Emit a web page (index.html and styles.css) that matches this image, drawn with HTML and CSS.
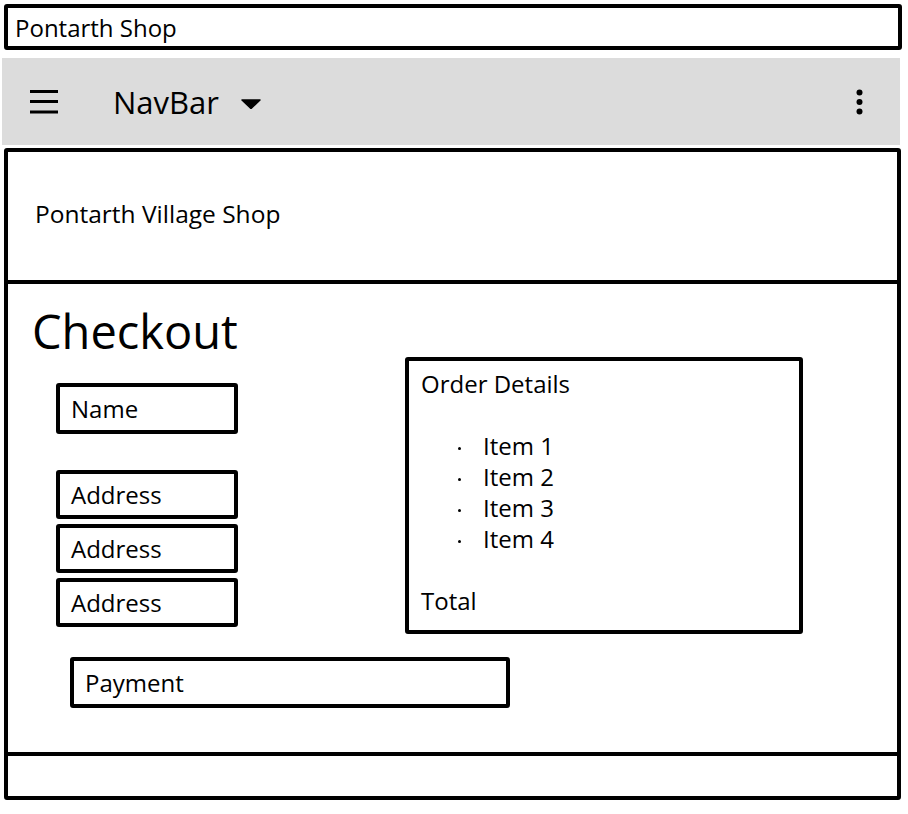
FILE: index.html
```html
<!DOCTYPE html>
<html lang="en">
<head>
    <meta charset="UTF-8">
    <meta name="viewport" content="width=device-width, initial-scale=1.0">
    <title>Pontarth Shop</title>
    <link rel="stylesheet" href="styles.css">
</head>
<body>

    <div class="titlebar">Pontarth Shop</div>

    <nav class="navbar">
        <svg class="icon-menu" width="28" height="24" viewBox="0 0 28 24">
            <path d="M0 1.5H28M0 11.5H28M0 22H28" stroke="#000" stroke-width="3"/>
        </svg>
        <span class="brand">NavBar</span>
        <svg class="icon-caret" width="20" height="10" viewBox="0 0 20 10">
            <path d="M1 1H19L10 9.5Z" fill="#000" stroke="#000" stroke-width="1.5" stroke-linejoin="round"/>
        </svg>
        <span class="spacer"></span>
        <svg class="icon-more" width="7" height="26" viewBox="0 0 7 26">
            <circle cx="3.5" cy="3.5" r="3"/>
            <circle cx="3.5" cy="13" r="3"/>
            <circle cx="3.5" cy="22.5" r="3"/>
        </svg>
    </nav>

    <div class="frame">
        <header class="site-header">Pontarth Village Shop</header>

        <main class="checkout">
            <h1>Checkout</h1>

            <div class="checkout-body">
                <div class="fields">
                    <div class="field field-name">Name</div>
                    <div class="address-group">
                        <div class="field">Address</div>
                        <div class="field">Address</div>
                        <div class="field">Address</div>
                    </div>
                </div>

                <div class="order">
                    <div class="order-title">Order Details</div>
                    <ul class="order-items">
                        <li>Item 1</li>
                        <li>Item 2</li>
                        <li>Item 3</li>
                        <li>Item 4</li>
                    </ul>
                    <div class="order-total">Total</div>
                </div>
            </div>

            <div class="field payment">Payment</div>
        </main>

        <footer class="site-footer"></footer>
    </div>

</body>
</html>
```

FILE: styles.css
```css
:root {
    --line: #000;
    --bar-color: #dcdcdc;
    --radius: 3px;
}

* {
    box-sizing: border-box;
    margin: 0;
    padding: 0;
    font-family: 'Open Sans', 'Noto Sans', sans-serif;
}

body {
    background-color: #fff;
    color: #000;
    font-size: 24px;
}

/* Window title */
.titlebar {
    height: 46px;
    margin: 4px 6px 0 4px;
    padding: 1px 7px 0;
    border: 4px solid var(--line);
    border-radius: var(--radius);
    display: flex;
    align-items: center;
}

/* Grey navigation bar */
.navbar {
    height: 87px;
    margin: 8px 8px 0 2px;
    padding: 0 37px 0 28px;
    background-color: var(--bar-color);
    display: flex;
    align-items: center;
}

.icon-menu {
    margin-top: 1px;
}

.brand {
    font-size: 31px;
    margin-left: 55px;
}

.icon-caret {
    margin: 4px 0 0 22px;
}

.spacer {
    flex: 1;
}

/* Main sketch frame */
.frame {
    height: 652px;
    margin: 3px 7px 0 4px;
    border: 4px solid var(--line);
    border-radius: var(--radius);
    display: flex;
    flex-direction: column;
}

.site-header {
    height: 132px;
    padding: 0 0 6px 27px;
    font-size: 24.5px;
    border-bottom: 4px solid var(--line);
    display: flex;
    align-items: center;
}

.checkout {
    height: 472px;
    padding: 25px 0 0 24px;
    border-bottom: 4px solid var(--line);
}

.checkout h1 {
    font-size: 47px;
    font-weight: 400;
    line-height: 45px;
    height: 45px;
}

.checkout-body {
    display: flex;
    align-items: flex-start;
    margin-top: 3px;
}

.fields {
    width: 182px;
    margin-left: 24px;
    padding-top: 26px;
}

.field {
    height: 49px;
    padding-left: 11px;
    border: 4px solid var(--line);
    border-radius: var(--radius);
    display: flex;
    align-items: center;
}

.field-name {
    height: 51px;
    margin-bottom: 36px;
}

.address-group {
    display: flex;
    flex-direction: column;
    gap: 5px;
}

/* Order summary */
.order {
    width: 398px;
    margin-left: 167px;
    padding: 7px 12px 14px;
    border: 4px solid var(--line);
    border-radius: var(--radius);
    line-height: 31px;
}

.order-items {
    list-style: none;
    margin: 31px 0;
}

.order-items li::before {
    content: "";
    display: inline-block;
    width: 3px;
    height: 3px;
    margin: 0 22px 0 37px;
    background-color: var(--line);
    border-radius: 50%;
    vertical-align: middle;
}

.payment {
    width: 440px;
    height: 51px;
    margin: 23px 0 0 38px;
}

.site-footer {
    flex: 1;
}
```
